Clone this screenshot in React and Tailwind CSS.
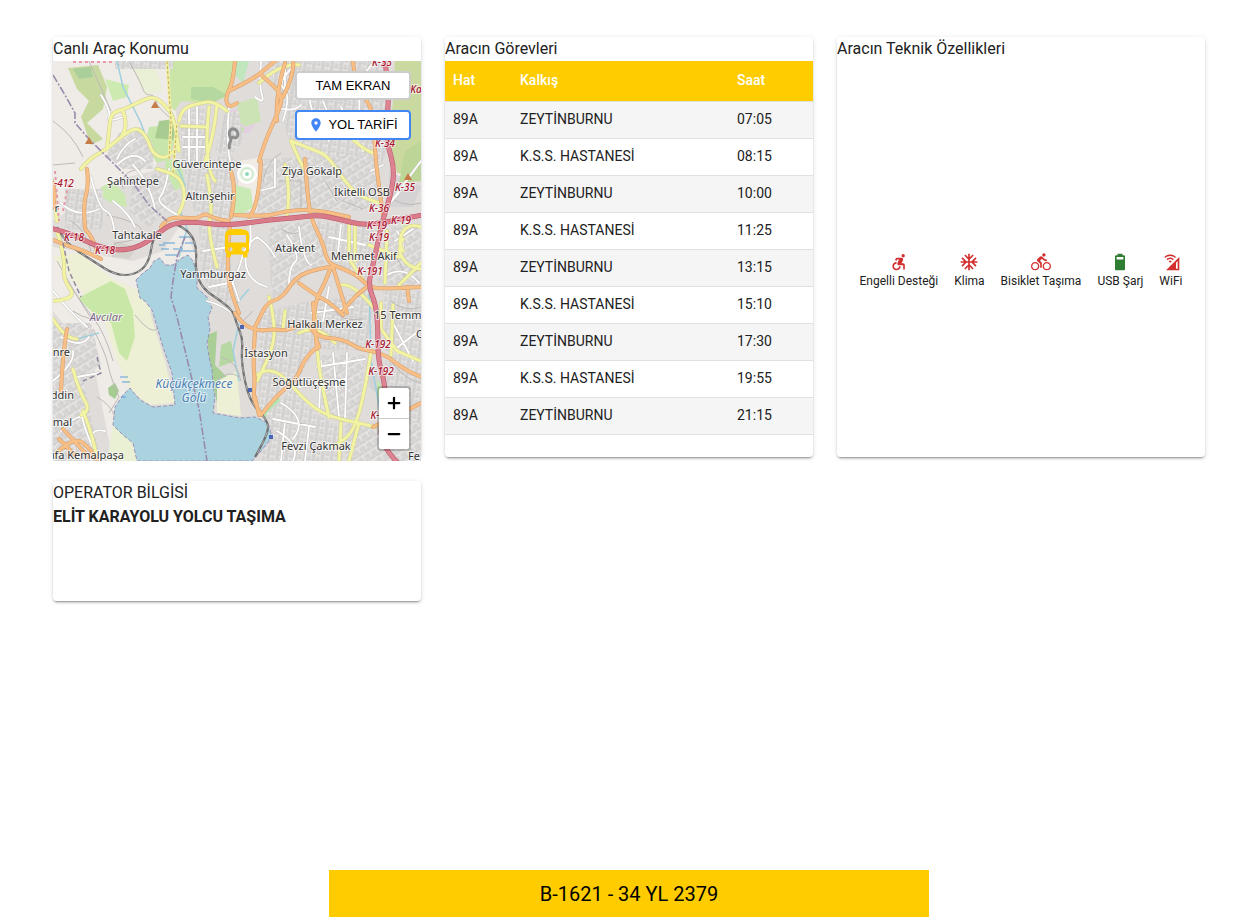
import { MdAccessibleForward, MdAcUnit, MdDirectionsBike, MdCellWifi, MdDirectionsBus, MdLocationOn } from "react-icons/md";
import { Plus, Minus } from "lucide-react";

const trips = [
  { line: "89A", stop: "ZEYTİNBURNU", time: "07:05" },
  { line: "89A", stop: "K.S.S. HASTANESİ", time: "08:15" },
  { line: "89A", stop: "ZEYTİNBURNU", time: "10:00" },
  { line: "89A", stop: "K.S.S. HASTANESİ", time: "11:25" },
  { line: "89A", stop: "ZEYTİNBURNU", time: "13:15" },
  { line: "89A", stop: "K.S.S. HASTANESİ", time: "15:10" },
  { line: "89A", stop: "ZEYTİNBURNU", time: "17:30" },
  { line: "89A", stop: "K.S.S. HASTANESİ", time: "19:55" },
  { line: "89A", stop: "ZEYTİNBURNU", time: "21:15" },
];

function BatteryIcon({ size, color }) {
  return (
    <svg width={size} height={size} viewBox="0 0 24 24" fill={color}>
      <path d="M16 9H8V6h8M16.67 4H15V2H9v2H7.33A1.33 1.33 0 0 0 6 5.33v15.34C6 21.4 6.6 22 7.33 22h9.34A1.33 1.33 0 0 0 18 20.67V5.33C18 4.6 17.4 4 16.67 4Z" />
    </svg>
  );
}

const features = [
  { label: "Engelli Desteği", icon: MdAccessibleForward, available: false },
  { label: "Klima", icon: MdAcUnit, available: false },
  { label: "Bisiklet Taşıma", icon: MdDirectionsBike, available: false },
  { label: "USB Şarj", icon: BatteryIcon, available: true },
  { label: "WiFi", icon: MdCellWifi, available: false },
];

// built-up blocks, each with its own street direction
const blocks = [
  { d: "M52 97 L66 72 88 66 100 84 100 108 70 108 60 100Z", fill: "url(#streetsB)" },
  { d: "M128 50 L152 46 156 60 154 100 128 104Z", fill: "url(#streetsA)" },
  { d: "M172 52 L162 90 176 96 190 80 186 50Z", fill: "url(#streetsA)" },
  { d: "M62 0 H120 V8 H62Z", fill: "url(#streetsA)" },
  { d: "M214 0 L330 0 334 90 320 120 300 120 262 96 236 82 226 40Z", fill: "url(#streetsA)" },
  { d: "M80 118 L112 110 128 140 110 152 96 166 76 150Z", fill: "url(#streetsB)" },
  { d: "M130 96 H180 V156 H144 L134 130Z", fill: "url(#streetsA)" },
  { d: "M205 98 L325 94 328 150 250 148 205 155Z", fill: "url(#streetsB)" },
  { d: "M12 128 H50 V168 H12Z", fill: "url(#streetsA)" },
  { d: "M146 166 H178 V250 L160 236 148 210Z", fill: "url(#streetsA)" },
  { d: "M216 165 L256 160 276 200 262 208 240 224 220 240Z", fill: "url(#streetsB)" },
  { d: "M262 160 L320 166 312 222 280 204Z", fill: "url(#streetsA)" },
  { d: "M330 166 H368 V226 L322 222Z", fill: "url(#streetsB)" },
  { d: "M0 262 L38 262 48 304 30 318 48 400 0 400Z", fill: "url(#streetsB)" },
  { d: "M206 252 L256 240 262 290 244 320 206 352Z", fill: "url(#streetsA)" },
  { d: "M266 242 L320 228 318 290 264 288Z", fill: "url(#streetsA)" },
  { d: "M264 294 L312 294 306 358 270 356Z", fill: "url(#streetsB)" },
  { d: "M214 352 L240 328 262 352 286 366 290 400 208 400Z", fill: "url(#streetsA)" },
  { d: "M292 362 H368 V400 H292Z", fill: "url(#streetsB)" },
  { d: "M330 230 H368 V362 H334Z", fill: "url(#streetsA)" },
];

const greens = [
  { d: "M15 7 L45 4 54 26 50 48 34 62 50 78 38 84 28 56 36 40 24 28Z", fill: "#c8d9a0" },
  { d: "M20 8 L38 6 40 16 26 18Z", fill: "#aacf9a" },
  { d: "M52 18 L76 24 74 36 60 40Z", fill: "#cdebb0" },
  { d: "M117 0 L182 0 176 36 152 42 128 40 122 50 116 44Z", fill: "#cbe5a8" },
  { d: "M138 26 L160 26 174 34 160 42 138 38Z", fill: "#b5d7a0" },
  { d: "M96 66 L116 64 122 78 116 98 104 102 92 84Z", fill: "#c8e6ab" },
  { d: "M106 60 L122 58 124 70 120 79 102 77Z", fill: "#a8cb92" },
  { d: "M48 126 L60 120 72 134 74 146 58 142 46 134Z", fill: "#cbe9b1" },
  { d: "M112 98 L128 100 132 124 122 130 112 118Z", fill: "#c9e8b0" },
  { d: "M184 0 L196 0 190 22 180 12Z", fill: "#bfe6bd" },
  { d: "M185 42 L204 36 208 60 192 66 184 58Z", fill: "#cce3b5" },
  { d: "M172 58 L182 56 192 70 178 74Z", fill: "#c4e4b1" },
  { d: "M182 124 L198 128 200 146 188 154 176 150Z", fill: "#c9e9b5" },
  { d: "M342 0 L368 0 368 115 344 112 336 80 340 40Z", fill: "#c9d99f" },
  { d: "M352 90 L368 80 368 120 346 122Z", fill: "#bdd596" },
  { d: "M348 162 L368 170 368 194 350 180Z", fill: "#d9e6bd" },
  { d: "M0 196 L26 192 60 218 92 232 100 262 112 300 122 342 96 344 76 328 60 288 50 256 22 222Z", fill: "#eef0d5" },
  { d: "M25 237 L58 220 72 228 80 250 82 276 74 300 66 292 58 262 44 256Z", fill: "#c9e8a8" },
  { d: "M55 327 L62 322 66 330 62 338 56 334Z", fill: "#a5cc92" },
  { d: "M60 364 L80 380 84 400 54 400Z", fill: "#eaf0d3" },
  { d: "M154 274 L164 270 162 304 178 320 166 350 158 316Z", fill: "#a9cf96" },
  { d: "M168 284 L178 280 182 300 166 306Z", fill: "#b7d8a2" },
  { d: "M164 320 L184 310 188 355 164 352Z", fill: "#eef0d5" },
  { d: "M222 222 L230 196 228 214 222 236Z", fill: "#a9d19b" },
  { d: "M238 300 L256 288 258 270 246 286 236 294Z", fill: "#b3e0b0" },
  { d: "M206 346 L222 332 228 340 212 358Z", fill: "#b7e3b2" },
  { d: "M324 318 L334 334 334 350 324 340Z", fill: "#c4e6b2" },
  { d: "M256 8 L270 4 272 18 260 22Z", fill: "#c4e2b6" },
  { d: "M298 130 L312 126 314 136 300 140Z", fill: "#c6e5b5" },
];

const lake =
  "M83 219 L90 212 97 207 101 200 107 197 112 204 120 204 127 198 135 194 140 200 144 214 144 227 154 236 159 247 155 256 157 268 154 282 156 296 159 309 160 324 162 336 160 352 187 357 202 356 215 362 219 376 209 389 199 400 84 400 80 382 70 374 60 364 62 346 70 334 77 327 82 333 87 339 100 346 112 345 122 344 119 312 110 286 105 269 99 249 92 240 87 237Z";

const minorRoads = [
  "M36 0 L52 36 58 50", "M76 0 L88 22 92 34 102 34 104 46 116 56", "M0 60 L20 74 30 96", "M0 104 L22 102",
  "M54 154 L90 162 88 180 62 182", "M62 182 L60 196", "M70 128 L66 110 88 108", "M38 190 L32 168 18 160",
  "M20 250 L38 262 50 256", "M40 268 L52 290 58 318 66 336", "M66 336 L56 352", "M44 336 L58 344 62 356",
  "M164 320 L176 308 186 316", "M168 296 L184 300 188 320", "M190 260 L200 250", "M210 120 L214 100 228 92",
  "M226 120 H248 V148", "M228 168 L240 176 248 170", "M272 120 L284 140", "M288 62 L302 82 318 92",
  "M246 60 L258 78", "M216 262 L242 268", "M280 246 L286 262 310 258", "M338 240 L352 252 368 246", "M338 300 L350 318 368 322",
  "M290 140 L310 148", "M330 132 L350 148 368 142", "M336 190 L350 200 352 218",
  "M10 214 L30 244 52 272 60 300", "M4 200 L24 236 40 260", "M82 254 L98 274 104 268",
];

const whiteRoads = [
  "M48 34 L58 50 54 62 70 56", "M64 98 L70 84 82 78", "M92 100 L80 88 64 104", "M38 116 L46 148 60 152 62 176",
  "M46 148 L24 158 8 142", "M60 140 L76 152 82 166", "M80 104 L96 120 102 148", "M116 108 L112 130 102 142 128 156",
  "M128 66 H152", "M130 76 H152", "M130 86 H152", "M136 46 V104", "M144 46 V104", "M176 46 L172 90 180 110",
  "M208 0 L206 24 212 44 202 36", "M238 8 L224 22 238 34 230 60", "M232 0 V34", "M222 46 L240 52 248 44",
  "M296 36 L326 20", "M288 46 L310 90", "M270 40 L280 62 276 80", "M306 36 L308 64 298 70",
  "M222 98 V126 L206 130", "M204 176 L192 184 186 210 176 228", "M204 176 L216 184 222 196",
  "M246 166 L250 200 258 204", "M234 174 L248 196 236 206 236 224", "M196 156 L200 180 190 200 200 222 214 226",
  "M288 164 L284 200", "M276 176 L312 184", "M284 216 L292 244", "M258 252 L300 246", "M276 226 L270 260",
  "M246 326 L292 318", "M264 306 L312 298", "M280 292 L286 356", "M294 292 L292 358", "M268 300 L266 352",
  "M220 358 L262 366", "M228 342 L256 358 240 378", "M224 370 L248 384 240 400", "M232 360 L228 400", "M256 366 L252 400",
  "M342 180 L360 168", "M344 170 L356 188 344 196", "M334 214 L352 204 366 222", "M340 262 L360 300", "M340 290 L368 268",
  "M8 276 L28 288 36 276", "M0 320 L22 302 20 290", "M24 316 L46 312", "M8 370 L28 348 40 372 46 400",
  "M28 352 L36 386 50 400", "M52 370 L34 366 40 386", "M0 230 L16 250 34 266", "M154 240 L170 244 184 256",
  "M318 110 L330 104", "M334 146 L368 100", "M346 132 L330 150",
  "M176 210 L186 240 M150 190 L176 186 M156 226 L176 222", "M254 30 L262 60 M318 4 L300 30",
];

const yellowRoads = [
  "M28 108 L36 98 54 88 70 74 84 66 94 76 100 94 116 98 124 86",
  "M54 88 L56 70 58 52 72 48 92 38 102 36 112 44 122 58 126 90", "M70 50 L76 66 68 76",
  "M126 60 L128 48 146 42 162 40 174 50", "M156 46 L150 104 162 120", "M164 44 L160 80 152 100", "M128 65 L154 66",
  "M104 108 L120 112 130 122 132 140 126 152", "M154 114 L160 146 154 170 164 206", "M0 132 L4 160",
  "M4 170 L12 196 10 218 22 234 8 240 0 240", "M0 258 L12 278 24 278", "M20 308 L26 330 38 350 28 354",
  "M206 22 L228 2 246 4", "M238 80 L258 88 274 94 290 118 306 136 326 142", "M238 80 L248 104 254 112", "M232 104 L238 132 234 154",
  "M286 60 L300 84 320 92", "M296 164 V198 L312 222", "M302 164 V200", "M334 170 L332 222", "M346 224 L368 202", "M350 178 C342 190 350 206 368 208",
  "M368 166 C352 160 342 176 350 190", "M216 236 L222 260 220 290 204 320", "M230 268 L232 250", "M204 314 L220 302 238 324",
  "M240 326 L256 344 278 356 306 362 322 366", "M318 290 L314 318 304 362 292 380 278 386", "M262 250 L264 290 268 320 276 356",
  "M246 272 L264 262 282 282", "M288 362 L286 400", "M306 362 L296 400", "M288 224 L300 222 320 246", "M328 242 V268 L344 290 368 300",
  "M340 244 L338 294", "M30 350 L42 380 44 400", "M316 184 L346 196",
];

const orangeRoads = [
  "M182 0 L180 22 172 36 176 48 184 42", "M176 30 L196 20 208 12 222 0", "M208 14 L220 24 230 36 224 54 212 80 206 100",
  "M230 36 L242 12 240 0", "M232 2 L222 34 224 60", "M208 100 L206 146 196 156", "M300 0 L302 22 314 40 320 52 322 88 324 112 330 154",
  "M34 108 L36 124 30 144 32 166", "M-2 118 L4 130 0 146", "M-2 178 L12 184 32 190 48 198", "M32 168 L40 176 44 190",
  "M108 166 L114 158 126 156 144 158 152 152 162 158 176 160", "M178 110 L184 130 178 156", "M177 166 L174 196 176 228 186 252",
  "M182 154 L212 156 232 150 264 148 296 156", "M252 98 L254 130 258 158 270 182 274 200 280 204", "M280 204 L302 212 316 226 330 228 368 226",
  "M276 206 L254 210 240 220 230 236 214 242 208 254 202 266", "M246 222 L262 234 278 242 290 254", "M278 206 L272 222 262 240 260 270 266 286",
  "M290 250 L302 234 314 226", "M280 206 L294 252", "M182 252 L190 264 206 270 220 268 236 270 246 264", "M202 270 L200 300 202 320 200 340 208 354",
  "M256 264 L262 276 290 278 306 288 320 290 336 296 350 308 368 316", "M264 286 L252 296 244 318 222 336 208 354", "M206 354 L202 336",
  "M260 242 L264 288", "M14 268 L10 290 8 330", "M0 396 L20 374 40 390 44 400", "M10 368 L36 396", "M6 378 L22 394", "M320 366 L342 356 368 342", "M354 226 L356 240",
];

const motorway = "M-3 167 L17 172 40 184 64 190 87 186 107 171 120 162 144 161 165 164 187 163 215 159 240 157 265 154 285 158 309 164 329 162 342 159 369 154";
const trunk = "M332 0 L336 30 334 60 334 82 342 109 337 137 329 161 325 181 320 204 315 224 323 244 325 269 325 299 332 322 332 350 325 382 345 402";
const railway = "M4 166 L12 182 40 200 62 214 82 214 96 202 100 176 110 166 122 162 138 172 144 188 142 210 150 228 168 240 180 250 184 264 190 278 188 300 196 340 214 358 216 372 202 396";

const places = [
  { t: "Güvercintepe", x: 154, y: 107 }, { t: "Şahintepe", x: 80, y: 124 }, { t: "Altınşehir", x: 157, y: 139 },
  { t: "Ziya Gökalp", x: 259, y: 114 }, { t: "İkitelli OSB", x: 309, y: 135 }, { t: "Tahtakale", x: 84, y: 178 },
  { t: "Atakent", x: 242, y: 191 }, { t: "Mehmet Akif", x: 311, y: 199 }, { t: "Yarımburgaz", x: 160, y: 217 },
  { t: "Halkalı Merkez", x: 272, y: 267 }, { t: "İstasyon", x: 213, y: 296 }, { t: "Söğütlüçeşme", x: 256, y: 325 },
  { t: "Fevzi Çakmak", x: 263, y: 389 }, { t: "15 Temm", x: 321, y: 258, a: "start" }, { t: "nre", x: 17, y: 295, a: "end" },
  { t: "ddin", x: 21, y: 338, a: "end" }, { t: "mal", x: 19, y: 365, a: "end" }, { t: "ıfa Kemalpaşa", x: 71, y: 398, a: "end" },
  { t: "Fe", x: 355, y: 399, a: "start" }, { t: "r", x: 6, y: 151, a: "end" }, { t: "C", x: 363, y: 277, a: "start" },
];

const roadRefs = [
  { t: "K-33", x: 329, y: 5 }, { t: "K-34", x: 332, y: 86 }, { t: "K-35", x: 352, y: 130 }, { t: "K-36", x: 326, y: 151 },
  { t: "K-19", x: 324, y: 168 }, { t: "K-19", x: 348, y: 163 }, { t: "K-19", x: 326, y: 180 }, { t: "K-191", x: 317, y: 214 },
  { t: "K-192", x: 325, y: 287 }, { t: "K-192", x: 328, y: 314 }, { t: "K-", x: 322, y: 358 }, { t: "K-18", x: 21, y: 180 },
  { t: "K-18", x: 52, y: 193 }, { t: "-412", x: 11, y: 126 }, { t: "Ka", x: 363, y: 32 },
];

// rounds the corners of an "M x y L x y x y ..." polyline; anything else is left alone
function smooth(d) {
  if (/[HVC]/.test(d) || d.lastIndexOf("M") > 0) return d;
  const n = d.match(/-?\d+/g).map(Number);
  if (n.length < 6) return d;
  let out = `M${n[0]} ${n[1]}`;
  for (let i = 2; i < n.length - 4; i += 2) {
    out += ` Q${n[i]} ${n[i + 1]} ${(n[i] + n[i + 2]) / 2} ${(n[i + 1] + n[i + 3]) / 2}`;
  }
  const e = n.length;
  return `${out} Q${n[e - 4]} ${n[e - 3]} ${n[e - 2]} ${n[e - 1]}`;
}

function Roads({ paths, casing, color, width }) {
  const d = paths.map(smooth).join(" ");
  return (
    <g fill="none" strokeLinejoin="round" strokeLinecap="round">
      <path d={d} stroke={casing} strokeWidth={width + 1} />
      <path d={d} stroke={color} strokeWidth={width} />
    </g>
  );
}

function CityMap() {
  return (
    <svg viewBox="0 0 368 400" preserveAspectRatio="xMidYMid slice" className="block w-full h-full" role="img" aria-label="Harita">
      <defs>
        <pattern id="streetsA" width="9" height="7" patternUnits="userSpaceOnUse" patternTransform="rotate(8)">
          <rect width="9" height="7" fill="#d6d4d3" />
          <path d="M0 0 H9 M0 4 H5 M0 0 V7 M5 0 V7" stroke="#efeeed" strokeWidth="1" />
          <path d="M0 1 H9 M6 2 V7" stroke="#bfbcbc" strokeWidth="0.5" />
        </pattern>
        <pattern id="streetsB" width="8" height="9" patternUnits="userSpaceOnUse" patternTransform="rotate(-32)">
          <rect width="8" height="9" fill="#d6d4d3" />
          <path d="M0 0 H8 M0 4 H8 M0 0 V9 M5 4 V9" stroke="#efeeed" strokeWidth="1" />
          <path d="M0 1 H8 M1 4 V9" stroke="#bfbcbc" strokeWidth="0.5" />
        </pattern>
      </defs>

      <rect width="368" height="400" fill="#dfdcda" />
      <path d="M0 0 H118 L124 60 100 110 60 120 0 160Z M0 186 L80 200 110 190 130 160 144 200 100 240 60 400 40 300 0 250Z" fill="#efebe6" />
      <path d="M76 0 L100 0 110 30 92 34Z" fill="#eaf0d5" />
      <path d="M186 100 L208 96 204 150 184 150Z M336 84 L352 94 360 128 342 126Z" fill="#f1ebe6" />
      <path d="M175 50 L192 46 206 58 196 72 178 72Z" fill="#e4cfe2" />
      <path d="M60 180 L84 186 76 198 62 196Z M20 196 L40 206 34 210Z M48 244 L56 238 66 254 60 262Z" fill="#d3d2ca" />
      <path d="M216 174 L232 176 236 218 218 226Z M312 300 L330 310 334 340 316 326Z M336 110 L368 126 360 146 336 146Z" fill="#d5d3d3" />
      {greens.map((g) => <path key={g.d} d={g.d} fill={g.fill} />)}
      {blocks.map((b) => <path key={b.d} d={b.d} fill={b.fill} />)}

      <path d={lake} fill="#aad3df" />
      <path d={lake} fill="none" stroke="#9a92b8" strokeWidth="1" strokeDasharray="4 2" />
      <path d="M64 0 L70 26 80 46 88 62 96 84 M122 100 L132 124 128 152 134 168 126 196" fill="none" stroke="#9fd0de" strokeWidth="1.5" />
      <path d="M186 320 L180 290 186 262 M316 226 L318 300 328 356 M24 278 L46 272 M196 228 L182 244" fill="none" stroke="#9fd0de" strokeWidth="1.5" />
      <path d="M110 182 H122 M126 176 H138 M108 188 H116 M120 188 H130 M112 194 H124 M132 182 H142 M106 184 H112 M128 190 H142 M67 316 H75 M69 321 H77 M68 336 H73" stroke="#5f9fd6" strokeWidth="1" />

      <path d={minorRoads.map(smooth).join(" ")} fill="none" stroke="#bcb9b7" strokeWidth="1" />
      <Roads paths={whiteRoads} casing="#c6c3c1" color="#ffffff" width={1.8} />
      <path d={smooth(railway)} fill="none" stroke="#707070" strokeWidth="2.2" />
      <path d={smooth(railway)} fill="none" stroke="#dddddd" strokeWidth="0.6" strokeDasharray="5 4" />
      <Roads paths={yellowRoads} casing="#cfcd92" color="#f2f3a3" width={3} />
      <Roads paths={orangeRoads} casing="#d69c68" color="#f7be85" width={3} />
      <Roads paths={[trunk]} casing="#b8566a" color="#dc8290" width={4} />
      <Roads paths={[motorway]} casing="#b8566a" color="#d97a89" width={4} />
      <path d="M10 150 L16 120 M2 110 L6 160 M20 1 H60" fill="none" stroke="#e69aa8" strokeWidth="2" strokeDasharray="3 3" />
      <path d="M116 98 L118 60 114 0 M120 112 L124 62" fill="none" stroke="#f0efa6" strokeWidth="3" />
      <path d="M116 98 L118 60 114 0 M120 112 L124 62" fill="none" stroke="#c9ad55" strokeWidth="1" strokeDasharray="3 2" />

      <path d="M0 14 L12 34 22 52 22 62 36 78 50 92 66 108 80 122 96 144 114 160 M132 176 L124 196 120 220 118 236 124 256 136 306 146 348 154 400" fill="none" stroke="#9a8bae" strokeWidth="1.6" strokeDasharray="8 2 2 2" />
      <path d="M10 182 L16 210 28 236 M44 296 L48 312 30 320" fill="none" stroke="#8d849c" strokeWidth="1.4" strokeDasharray="5 3" />

      <path d="M177 88 C174 84 178 82 178 78 C174 70 178 66 183 69 C188 74 182 80 179 75" fill="none" stroke="#8d8d8d" strokeWidth="3" />
      <g fill="#eef6e9" stroke="#ffffff" strokeWidth="2">
        <circle cx="194" cy="113" r="9" />
        <circle cx="194" cy="113" r="6" fill="none" stroke="#bfe3c4" strokeWidth="1" />
        <circle cx="194" cy="113" r="3" fill="#8fd6b8" />
      </g>
      <g fill="#c77b45">
        <path d="M102 40 L98 47 H106Z" />
        <path d="M36 76 L32 83 H40Z" />
        <path d="M355 112 L351 119 H359Z" />
      </g>
      <path d="M187 264 h4 v4 h-4Z M195 327 h4 v4 h-4Z M216 374 h4 v4 h-4Z" fill="#4a63b5" />

      <g className="font-['Noto_Sans',sans-serif] text-[11px]" paintOrder="stroke" stroke="#ffffff" strokeOpacity="0.7" strokeWidth="2" strokeLinejoin="round">
        {places.map((p) => (
          <text key={p.t} x={p.x} y={p.y} fill="#333333" textAnchor={p.a || "middle"}>{p.t}</text>
        ))}
      </g>
      <g className="font-['Noto_Sans',sans-serif] text-[11px] italic" textAnchor="middle" paintOrder="stroke" stroke="#ffffff" strokeOpacity="0.6" strokeWidth="2">
        <text x="53" y="260" fill="#80698c">Avcılar</text>
        <g className="text-[12px]" fill="#4d80b3">
          <text x="141" y="327">Küçükçekmece</text>
          <text x="141" y="341">Gölü</text>
        </g>
        <g className="text-[10px] font-medium" fill="#a8132e">
          {roadRefs.map((r) => (
            <text key={`${r.t}${r.x}`} x={r.x} y={r.y}>{r.t}</text>
          ))}
        </g>
      </g>
    </svg>
  );
}

function Card({ title, className, children }) {
  return (
    <section className={`flex flex-col rounded bg-white shadow-[0_3px_1px_-2px_rgba(0,0,0,0.2),0_2px_2px_0_rgba(0,0,0,0.14),0_1px_5px_0_rgba(0,0,0,0.12)] ${className}`}>
      <h2 className="text-base leading-6">{title}</h2>
      {children}
    </section>
  );
}

function LiveMap() {
  return (
    <div className="relative h-[400px] shrink-0 overflow-hidden">
      <CityMap />
      <MdDirectionsBus size={36} color="#ffcc00" className="absolute left-1/2 top-[165px] -translate-x-1/2" aria-label="Araç" />
      <div className="absolute top-[10px] right-[10px] flex flex-col gap-[10px] font-['Liberation_Sans',Arial,sans-serif] text-[13px] text-black">
        <button className="h-[29px] rounded border-2 border-[#cccccc] bg-white">TAM EKRAN</button>
        <button className="h-[30px] w-[116px] rounded border-2 border-[#4285f4] bg-white flex items-center justify-center gap-1">
          <MdLocationOn size={16} color="#4285f4" /> YOL TARİFİ
        </button>
      </div>
      <div className="absolute bottom-[10px] right-[10px] flex flex-col rounded border-2 border-black/20 bg-white bg-clip-padding text-black">
        <button className="w-[30px] h-[31px] flex items-center justify-center border-b border-[#ccc]" aria-label="Yakınlaştır">
          <Plus size={18} strokeWidth={3} />
        </button>
        <button className="w-[30px] h-[30px] flex items-center justify-center" aria-label="Uzaklaştır">
          <Minus size={18} strokeWidth={3} />
        </button>
      </div>
    </div>
  );
}

function TripTable() {
  return (
    <table className="w-full table-fixed text-sm leading-5 text-left">
      <thead>
        <tr className="h-10 bg-[#ffcc00] text-white border-b border-[#e0e0e0]">
          <th className="w-[67px] px-2 pb-0.5 font-medium">Hat</th>
          <th className="px-2 pb-0.5 font-medium">Kalkış</th>
          <th className="w-[84px] px-2 pb-0.5 font-medium">Saat</th>
        </tr>
      </thead>
      <tbody>
        {trips.map((trip) => (
          <tr key={trip.time} className="h-[37px] border-b border-[#e0e0e0] odd:bg-[#f5f5f5]">
            <td className="px-2 pb-0.5">{trip.line}</td>
            <td className="px-2 pb-0.5">{trip.stop}</td>
            <td className="px-2 pb-0.5">{trip.time}</td>
          </tr>
        ))}
      </tbody>
    </table>
  );
}

export default function App() {
  return (
    <div className="min-h-screen flex flex-col bg-white pl-[53px] pr-9 pt-[37px] font-[Roboto,sans-serif] text-[#212121]">
      <main className="grid grid-cols-1 md:grid-cols-3 gap-6 pb-6">
        <Card title="Canlı Araç Konumu" className="h-[420px]">
          <LiveMap />
        </Card>

        <Card title="Aracın Görevleri" className="h-[420px]">
          <TripTable />
        </Card>

        <Card title="Aracın Teknik Özellikleri" className="h-[420px]">
          <ul className="flex-1 flex items-center justify-center gap-4 pt-6">
            {features.map(({ label, icon: Icon, available }) => (
              <li key={label} className="flex flex-col items-center text-xs leading-[18px]">
                <Icon size={20} color={available ? "#2e7d32" : "#d32f2f"} />
                {label}
              </li>
            ))}
          </ul>
        </Card>

        <Card title="OPERATOR BİLGİSİ" className="h-[120px]">
          <p className="text-base leading-6 font-bold">ELİT KARAYOLU YOLCU TAŞIMA</p>
        </Card>
      </main>

      <footer className="mt-auto mx-auto w-full max-w-[600px] h-[47px] flex items-center justify-center bg-[#ffcc00] text-xl text-black">
        B-1621 - 34 YL 2379
      </footer>
    </div>
  );
}
